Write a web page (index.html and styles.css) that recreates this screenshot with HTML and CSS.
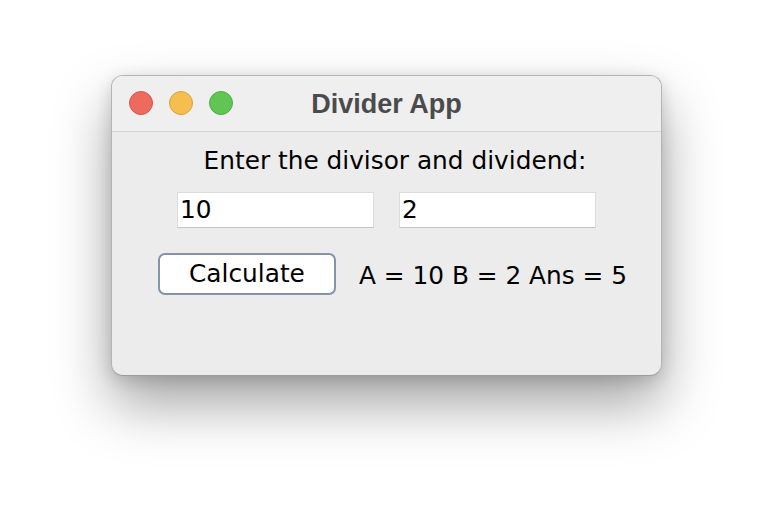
FILE: index.html
```html
<!DOCTYPE html>
<html>
<head>
<meta charset="utf-8">
<link rel="stylesheet" href="styles.css">
</head>
<body>
<div class="window">
  <div class="titlebar">
    <div class="lights">
      <span class="light red"></span>
      <span class="light yellow"></span>
      <span class="light green"></span>
    </div>
    <div class="title">Divider App</div>
  </div>
  <div class="content">
    <div class="prompt">Enter the divisor and dividend:</div>
    <div class="fields">
      <div class="field">10</div>
      <div class="field">2</div>
    </div>
    <div class="actions">
      <button class="calc">Calculate</button>
      <span class="result">A = 10 B = 2 Ans = 5</span>
    </div>
  </div>
</div>
</body>
</html>
```
FILE: styles.css
```css
html, body {
  margin: 0;
  background: #ffffff;
}
body {
  width: 774px;
  height: 524px;
  padding: 75px 0 0 111px;
  box-sizing: border-box;
  overflow: hidden;
}
.window {
  width: 551px;
  height: 301px;
  box-sizing: border-box;
  border-radius: 12px;
  background: #ececec;
  border: 1px solid #b4b4b4;
  border-bottom-color: #9c9c9c;
  box-shadow: 0 28px 56px rgba(0, 0, 0, 0.36), 0 4px 16px rgba(0,0,0,0.14);
  overflow: hidden;
  font-family: "DejaVu Sans", sans-serif;
  color: #000;
}
.titlebar {
  position: relative;
  height: 55px;
  background: #efeff0;
  border-bottom: 1px solid #d3d3d3;
  display: flex;
  align-items: center;
  justify-content: center;
}
.lights {
  position: absolute;
  left: 17px;
  top: 15px;
  display: flex;
  gap: 16px;
}
.light {
  width: 24px;
  height: 24px;
  border-radius: 50%;
  box-sizing: border-box;
}
.red { background: #ed6a5e; border: 1px solid #d65549; }
.yellow { background: #f5bf4f; border: 1px solid #d9a33a; }
.green { background: #61c554; border: 1px solid #4ead42; }
.title {
  font-family: "Liberation Sans", "Inter", sans-serif;
  font-weight: bold;
  font-size: 27px;
  color: #4b4b4b;
  margin-left: 0;
  margin-top: 1px;
}
.content {
  display: flex;
  flex-direction: column;
  align-items: center;
}
.prompt {
  font-size: 24.8px;
  margin-top: 14px;
  padding-left: 17px;
  line-height: 30px;
}
.fields {
  display: flex;
  gap: 25px;
  margin-top: 16px;
}
.field {
  width: 197px;
  height: 36px;
  box-sizing: border-box;
  background: #fff;
  border: 1px solid #dcdcdc;
  border-bottom-color: #c4c4c4;
  font-size: 24.8px;
  line-height: 34px;
  padding-left: 2px;
}
.actions {
  display: flex;
  align-items: center;
  gap: 23px;
  margin-top: 25px;
  padding-left: 12px;
}
.calc {
  width: 178px;
  height: 42px;
  box-sizing: border-box;
  background: #fff;
  border: 2px solid #8592a8;
  border-radius: 7px;
  font-family: "DejaVu Sans", sans-serif;
  font-size: 24.8px;
  line-height: 30px;
  color: #000;
  padding: 0;
}
.result {
  font-size: 24.8px;
  line-height: 30px;
  margin-top: 3px;
}
```
